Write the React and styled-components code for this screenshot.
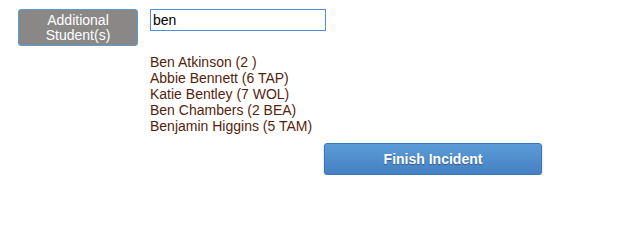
import React from "react";
import styled, { createGlobalStyle } from "styled-components";

const Global = createGlobalStyle`
  html, body { margin: 0; padding: 0; background: #fff; }
  body { font-family: "Liberation Sans", Arial, sans-serif; }
`;

const Page = styled.div`
  display: grid;
  grid-template-columns: 120px 1fr;
  column-gap: 12px;
  padding: 9px 0 0 18px;
`;

const SideButton = styled.button`
  box-sizing: border-box;
  width: 120px;
  height: 37px;
  background: #8a8886;
  border: 1px solid #5b9bd5;
  border-radius: 3px;
  color: #fff;
  font-family: "Liberation Sans", Arial, sans-serif;
  font-size: 14px;
  line-height: 15px;
  padding: 1px 0 0 0;
  text-align: center;
`;

const Main = styled.div`
  display: flex;
  flex-direction: column;
`;

const SearchInput = styled.input`
  box-sizing: border-box;
  width: 176px;
  height: 22px;
  border: 1px solid #4a90d9;
  padding: 0 2px;
  font-family: "Liberation Sans", Arial, sans-serif;
  font-size: 14px;
  color: #000;
  outline: none;
`;

const Results = styled.ul`
  list-style: none;
  margin: 23px 0 0 0;
  padding: 0;
`;

const Result = styled.li`
  font-size: 14px;
  line-height: 16px;
  color: #561e0c;
`;

const FinishButton = styled.button`
  box-sizing: border-box;
  align-self: flex-start;
  margin: 9px 0 0 174px;
  width: 218px;
  height: 32px;
  border: 1px solid #3f75b0;
  border-radius: 3px;
  background: linear-gradient(#5c9cd8, #4580c2);
  box-shadow: 0 1px 2px rgba(0, 0, 0, 0.3);
  color: #fff;
  font-family: "Liberation Sans", Arial, sans-serif;
  font-weight: bold;
  font-size: 14px;
  text-shadow: 0 1px 1px rgba(0, 0, 0, 0.35);
`;

const students = [
  "Ben Atkinson (2 )",
  "Abbie Bennett (6 TAP)",
  "Katie Bentley (7 WOL)",
  "Ben Chambers (2 BEA)",
  "Benjamin Higgins (5 TAM)",
];

export default function App() {
  return (
    <>
      <Global />
      <Page>
        <div>
          <SideButton>
            Additional
            <br />
            Student(s)
          </SideButton>
        </div>
        <Main>
          <SearchInput defaultValue="ben" />
          <Results>
            {students.map((s) => (
              <Result key={s}>{s}</Result>
            ))}
          </Results>
          <FinishButton>Finish Incident</FinishButton>
        </Main>
      </Page>
    </>
  );
}
